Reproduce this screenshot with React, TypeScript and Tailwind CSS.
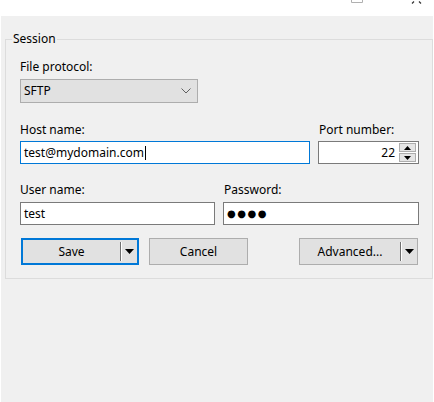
import React from "react";

const font = { fontFamily: '"Noto Sans", "Segoe UI", sans-serif' };

function DropArrow() {
  return (
    <svg width="9" height="5" viewBox="0 0 9 5" className="block">
      <path d="M0 0h9L4.5 5z" fill="#000" />
    </svg>
  );
}

function SplitButton({ label, focused, className }: { label: string; focused?: boolean; className: string }) {
  return (
    <button
      className={
        "flex h-[27px] items-center bg-[#e1e1e1] text-[12px] text-black " +
        (focused ? "border-2 border-[#0078d7] " : "border border-[#adadad] ") +
        className
      }
    >
      <span className="flex-1 text-center">{label}</span>
      <span className="h-[19px] w-px bg-[#707070]" />
      <span className="h-[19px] w-px bg-white" />
      <span className="flex w-[15px] justify-center">
        <DropArrow />
      </span>
    </button>
  );
}

function Spinner() {
  return (
    <div className="flex h-[19px] w-[17px] flex-col gap-px">
      <div className="flex flex-1 items-center justify-center border border-[#adadad] bg-[#e5e5e5]">
        <svg width="7" height="4" viewBox="0 0 7 4">
          <path d="M0 4h7L3.5 0z" fill="#000" />
        </svg>
      </div>
      <div className="flex flex-1 items-center justify-center border border-[#adadad] bg-[#e5e5e5]">
        <svg width="7" height="4" viewBox="0 0 7 4">
          <path d="M0 0h7L3.5 4z" fill="#000" />
        </svg>
      </div>
    </div>
  );
}

export default function App() {
  return (
    <div className="flex h-[402px] w-[434px] flex-col bg-white text-black" style={font}>
      <div className="flex h-4 items-start justify-end gap-[48px] pr-[12px]">
        <svg width="12" height="3" viewBox="0 0 12 3">
          <path d="M0.5 0v2.5h11V0" fill="none" stroke="#b0b0b0" />
        </svg>
        <svg width="11" height="4" viewBox="0 0 11 4">
          <path d="M1 3.5L3 1.5M10 3.5L8 1.5" fill="none" stroke="#333" strokeWidth="1.2" />
        </svg>
      </div>
      <div className="ml-px w-[432px] flex-1 bg-[#f0f0f0] pt-[15px]">
        <fieldset className="ml-1 border border-[#dcdcdc] pb-[13px]">
          <legend className="ml-[6px] px-[1px] text-[12px] leading-4">Session</legend>
          <div className="pl-[14px]">
            <div className="mt-[12px] text-[12px] leading-4">File protocol:</div>
            <div className="mt-1 flex h-6 w-[178px] items-center justify-between border border-[#adadad] bg-[#e1e1e1] pl-[3px] pr-[6px] text-[12px]">
              <span>SFTP</span>
              <svg width="10" height="6" viewBox="0 0 10 6">
                <path d="M0.5 0.5L5 5L9.5 0.5" fill="none" stroke="#606060" />
              </svg>
            </div>

            <div className="mt-[19px] flex gap-[8px] text-[12px] leading-4">
              <span className="w-[290px]">Host name:</span>
              <span className="pl-px">Port number:</span>
            </div>
            <div className="mt-[3px] flex gap-[8px]">
              <div className="flex h-[23px] w-[290px] items-center border border-[#0078d7] bg-white pl-[3px] text-[12px]">
                test@mydomain.com
                <span className="ml-px h-[14px] w-px bg-black" />
              </div>
              <div className="flex h-[23px] w-[101px] items-center justify-end gap-[4px] border border-[#7a7a7a] bg-white pr-[2px] text-[12px]">
                <span>22</span>
                <Spinner />
              </div>
            </div>

            <div className="mt-[18px] flex gap-[8px] text-[12px] leading-4">
              <span className="w-[195px]">User name:</span>
              <span className="pl-px">Password:</span>
            </div>
            <div className="mt-[4px] flex gap-[8px]">
              <div className="flex h-[23px] w-[195px] items-center border border-[#7a7a7a] bg-white pl-[3px] text-[12px]">
                test
              </div>
              <div
                className="flex h-[23px] w-[196px] items-center border border-[#7a7a7a] bg-white pl-[3px] text-[10px] tracking-[1.5px]"
                style={{ fontFamily: '"DejaVu Sans", sans-serif' }}
              >
                ●●●●
              </div>
            </div>

            <div className="mt-[13px] flex">
              <SplitButton label="Save" focused className="ml-px w-[118px]" />
              <button className="ml-[10px] h-[27px] w-[99px] border border-[#adadad] bg-[#e1e1e1] text-[12px]">
                Cancel
              </button>
              <SplitButton label="Advanced..." className="ml-[51px] w-[119px]" />
            </div>
          </div>
        </fieldset>
      </div>
    </div>
  );
}
